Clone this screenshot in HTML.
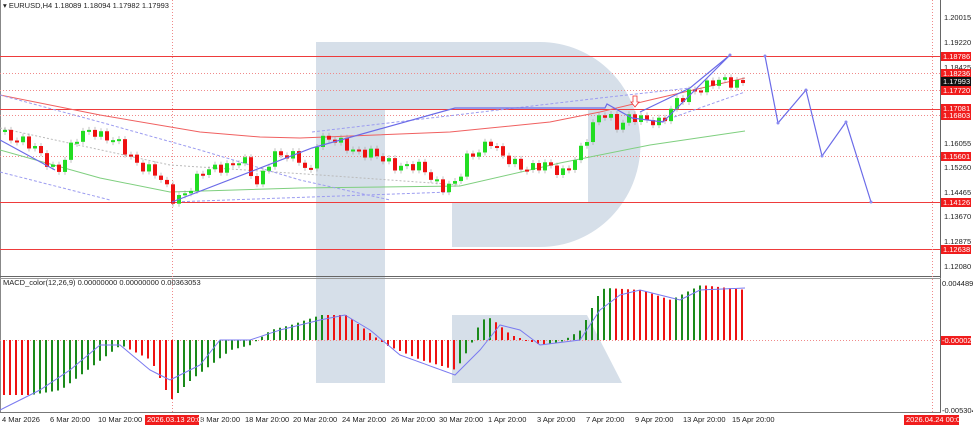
<!DOCTYPE html>
<html><head><meta charset="utf-8"><style>
html,body{margin:0;padding:0;background:#fff;width:973px;height:426px;overflow:hidden}
svg{display:block}
text{font-family:"Liberation Sans",sans-serif;font-size:7.5px;fill:#222}
</style></head><body>
<svg id="s" width="973" height="426" viewBox="0 0 973 426" xmlns="http://www.w3.org/2000/svg">
<g fill="#d6dfe9">
<rect x="316" y="42" width="69" height="341"/>
<path d="M384 42 H540 A100 102 0 0 1 540 247 H452 V202 H588 V110 H384 Z"/>
<path d="M452 315 H587 L622 383 H452 Z"/>
</g>
<line x1="0.5" y1="0" x2="0.5" y2="413" stroke="#888"/>
<line x1="940.5" y1="0" x2="940.5" y2="413" stroke="#666"/>
<line x1="0" y1="276.5" x2="941" y2="276.5" stroke="#666" stroke-width="1"/>
<line x1="0" y1="278.5" x2="941" y2="278.5" stroke="#999" stroke-width="1"/>
<line x1="0" y1="412.5" x2="941" y2="412.5" stroke="#777"/>
<g stroke="#ee3b3b" stroke-width="1">
<line x1="0" y1="56.5" x2="940" y2="56.5"/>
<line x1="0" y1="109.5" x2="940" y2="109.5"/>
<line x1="0" y1="202.5" x2="940" y2="202.5"/>
<line x1="0" y1="249.5" x2="940" y2="249.5"/>
</g>
<g stroke="#f08a8a" stroke-width="1" stroke-dasharray="1,2">
<line x1="0" y1="73.5" x2="940" y2="73.5"/>
<line x1="0" y1="90.5" x2="940" y2="90.5"/>
<line x1="0" y1="115.5" x2="940" y2="115.5"/>
<line x1="0" y1="156.5" x2="940" y2="156.5"/>
<line x1="0" y1="340.5" x2="940" y2="340.5"/>
<line x1="172.5" y1="0" x2="172.5" y2="413"/>
<line x1="932.5" y1="0" x2="932.5" y2="413"/>
</g>
<polyline fill="none" stroke="#f06060" stroke-width="1" points="0,95 100,115 200,132 260,137 300,138 450,132 550,122 600,112 650,100 745,78"/>
<polyline fill="none" stroke="#7fcf7f" stroke-width="1" points="0,150 100,178 170,192 300,188 460,186 560,163 650,145 745,131"/>
<polyline fill="none" stroke="#9c9cf0" stroke-width="1" stroke-dasharray="3,2" points="0,95 100,122 200,150 300,180 390,200"/>
<polyline fill="none" stroke="#9c9cf0" stroke-width="1" stroke-dasharray="3,2" points="0,172 110,200"/>
<polyline fill="none" stroke="#bbb" stroke-width="1" stroke-dasharray="2,2" points="0,128 170,165 320,175 460,185"/>
<polyline fill="none" stroke="#9c9cf0" stroke-width="1" stroke-dasharray="3,2" points="172,202 450,192"/>
<polyline fill="none" stroke="#9c9cf0" stroke-width="1" stroke-dasharray="3,2" points="312,132 600,98 690,88"/>
<polyline fill="none" stroke="#9c9cf0" stroke-width="1" stroke-dasharray="3,2" points="660,122 745,92"/>
<g id="dyn"></g>
<polyline fill="none" stroke="#6b6be8" stroke-width="1.2" points="0,140 55,170"/>
<polyline fill="none" stroke="#6b6be8" stroke-width="1.2" points="172,202 312,148 455,108 605,108 607,104 632,118 663,122 730,55 690,88 640,112"/>
<polyline fill="none" stroke="#6b6be8" stroke-width="1.2" points="765,56 778,123 806,90 822,156 846,122 871,202"/>
<g fill="#8a8af0"><circle cx="765" cy="56" r="1.5"/><circle cx="778" cy="123" r="1.5"/><circle cx="806" cy="90" r="1.5"/><circle cx="822" cy="156" r="1.5"/><circle cx="846" cy="122" r="1.5"/><circle cx="871" cy="202" r="1.5"/><circle cx="730" cy="55" r="1.5"/></g>
<path d="M633 96 h4 v6 h2 l-4 5 l-4 -5 h2z" fill="#fff" stroke="#e33" stroke-width="0.8"/>
<polyline id="sig" fill="none" stroke="#7a7af0" stroke-width="1"/>
<text x="3" y="8">▾ EURUSD,H4  1.18089 1.18094 1.17982 1.17993</text>
<text x="3" y="285">MACD_color(12,26,9) 0.00000000 0.00000000 0.00363053</text>
<g>
<text x="944" y="20">1.20015</text>
<text x="944" y="45">1.19220</text>
<text x="944" y="70">1.18425</text>
<text x="944" y="146">1.16055</text>
<text x="944" y="170">1.15260</text>
<text x="944" y="195">1.14465</text>
<text x="944" y="219">1.13670</text>
<text x="944" y="244">1.12875</text>
<text x="944" y="269">1.12080</text>
<text x="942" y="286">0.00448999</text>
<text x="942" y="413">-0.0053045</text>
</g>
<g fill="#f01c1c">
<rect x="941" y="52" width="30" height="9"/><rect x="941" y="69" width="30" height="9"/>
<rect x="941" y="86" width="30" height="9"/><rect x="941" y="104" width="30" height="9"/>
<rect x="941" y="111" width="30" height="9"/><rect x="941" y="152" width="30" height="9"/>
<rect x="941" y="198" width="30" height="9"/><rect x="941" y="245" width="30" height="9"/>
<rect x="941" y="336" width="30" height="9"/>
</g>
<rect x="941" y="77" width="30" height="9" fill="#111"/>
<g>
<text x="943" y="59" style="fill:#fff">1.18786</text><text x="943" y="76" style="fill:#fff">1.18236</text>
<text x="943" y="84" style="fill:#fff">1.17993</text>
<text x="943" y="93" style="fill:#fff">1.17720</text><text x="943" y="111" style="fill:#fff">1.17081</text>
<text x="943" y="118" style="fill:#fff">1.16803</text><text x="943" y="159" style="fill:#fff">1.15601</text>
<text x="943" y="205" style="fill:#fff">1.14126</text><text x="943" y="252" style="fill:#fff">1.12638</text>
<text x="942" y="343" style="fill:#fff">-0.000026</text>
</g>
<g>
<text x="2" y="422">4 Mar 2026</text><text x="50" y="422">6 Mar 20:00</text><text x="98" y="422">10 Mar 20:00</text>
<text x="200" y="422">8 Mar 20:00</text><text x="245" y="422">18 Mar 20:00</text><text x="293" y="422">20 Mar 20:00</text>
<text x="342" y="422">24 Mar 20:00</text><text x="391" y="422">26 Mar 20:00</text><text x="439" y="422">30 Mar 20:00</text>
<text x="488" y="422">1 Apr 20:00</text><text x="537" y="422">3 Apr 20:00</text><text x="586" y="422">7 Apr 20:00</text>
<text x="635" y="422">9 Apr 20:00</text><text x="683" y="422">13 Apr 20:00</text><text x="732" y="422">15 Apr 20:00</text>
</g>
<rect x="145" y="415" width="54" height="10" fill="#f01c1c"/><text x="147" y="422" style="fill:#fff">2026.03.13 20:00</text>
<rect x="904" y="415" width="55" height="10" fill="#f01c1c"/><text x="906" y="422" style="fill:#fff">2026.04.24 00:00</text>
</svg>
<script>
(function(){
function interp(pts,x){for(var i=1;i<pts.length;i++){if(x<=pts[i][0]){var a=pts[i-1],b=pts[i];return a[1]+(b[1]-a[1])*(x-a[0])/(b[0]-a[0]);}}return pts[pts.length-1][1];}
var price=[[0,132],[20,140],[55,170],[75,140],[90,128],[110,140],[130,158],[150,170],[172,200],[190,185],[200,175],[220,165],[240,160],[255,185],[262,170],[270,152],[285,158],[300,160],[308,178],[312,140],[320,140],[345,145],[380,160],[420,170],[440,185],[455,185],[465,160],[480,145],[490,140],[500,160],[520,165],[545,168],[560,172],[580,150],[590,130],[595,118],[605,110],[615,125],[630,120],[650,118],[660,122],[670,110],[690,88],[710,85],[720,82],[745,80]];
var macd=[[0,395],[30,395],[60,390],[100,360],[120,345],[150,360],[170,400],[190,380],[230,350],[250,345],[270,330],[290,325],[320,315],[345,315],[365,330],[385,345],[420,360],[455,370],[470,345],[480,320],[490,318],[510,335],[540,345],[560,342],[580,330],[600,290],[605,288],[640,290],[670,300],[700,285],[745,290]];
var sig=[[0,410],[40,390],[70,370],[100,345],[120,345],[150,370],[170,380],[200,365],[220,340],[250,340],[280,330],[320,320],[345,315],[370,330],[400,355],[455,375],[480,350],[500,325],[520,330],[540,345],[580,340],[600,310],[620,295],[640,290],[680,300],[700,290],[745,288]];
var h='';var prev=interp(price,0),pm=interp(macd,0);
for(var x=3;x<=745;x+=6){var c=interp(price,x)+Math.sin(x*1.7)*5+Math.sin(x*0.9)*3;var o=prev;var up=c<o;
var t=Math.min(o,c),b=Math.max(o,c);if(b-t<2)b=t+2;
var col=up?'#22dd22':'#ee1111';
h+='<line x1="'+(x+2)+'" y1="'+(t-3)+'" x2="'+(x+2)+'" y2="'+(b+3)+'" stroke="#999" stroke-width="0.6"/>';
h+='<rect x="'+x+'" y="'+t+'" width="4" height="'+(b-t)+'" fill="'+col+'"/>';prev=c;
var m=interp(macd,x);var inc=m<pm-0.01;var mc=inc?'#1a8a1a':'#ee1111';
h+='<rect x="'+x+'" y="'+Math.min(340,m)+'" width="2" height="'+Math.max(1,Math.abs(m-340))+'" fill="'+mc+'"/>';pm=m;}
document.getElementById('dyn').innerHTML=h;
var s='';for(var x2=0;x2<=745;x2+=5)s+=x2+','+interp(sig,x2)+' ';document.getElementById('sig').setAttribute('points',s);
})();
</script>
</body></html>
